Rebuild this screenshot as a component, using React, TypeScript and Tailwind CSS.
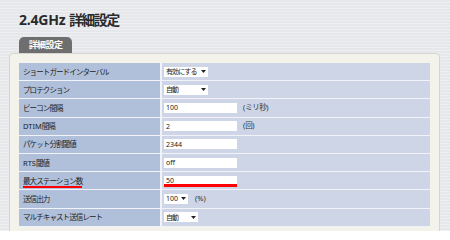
import React from "react";

type Field =
  | { kind: "select"; value: string; width: string; unit?: string }
  | { kind: "input"; value: string; unit?: string; marked?: boolean };

interface Row {
  label: string;
  field: Field;
  marked?: boolean;
}

const ROWS: Row[] = [
  { label: "ショートガードインターバル", field: { kind: "select", value: "有効にする", width: "w-[44px]" } },
  { label: "プロテクション", field: { kind: "select", value: "自動", width: "w-[44px]" } },
  { label: "ビーコン間隔", field: { kind: "input", value: "100", unit: "(ミリ秒)" } },
  { label: "DTIM間隔", field: { kind: "input", value: "2", unit: "(回)" } },
  { label: "パケット分割閾値", field: { kind: "input", value: "2344" } },
  { label: "RTS閾値", field: { kind: "input", value: "off" } },
  { label: "最大ステーション数", field: { kind: "input", value: "50", marked: true }, marked: true },
  { label: "送信出力", field: { kind: "select", value: "100", width: "w-[24px]", unit: "(%)" } },
  { label: "マルチキャスト送信レート", field: { kind: "select", value: "自動", width: "w-[34px]" } },
];

// Latin runs keep normal spacing; only the kana/kanji runs get squeezed
function Squeezed({ text }: { text: string }) {
  return (
    <>
      {text.split(/([A-Za-z0-9()%]+)/).map((part, i) =>
        /^[A-Za-z0-9()%]+$/.test(part) ? (
          <span key={i} className="tracking-normal">
            {part}
          </span>
        ) : (
          <span key={i}>{part}</span>
        )
      )}
    </>
  );
}

function Caret() {
  return (
    <svg width="5" height="3" viewBox="0 0 5 3" className="shrink-0">
      <path d="M0 0h5L2.5 3z" fill="#222" />
    </svg>
  );
}

function FieldCell({ field }: { field: Field }) {
  if (field.kind === "select") {
    return (
      <div className="flex items-center">
        <div
          className={`${field.width} h-[10px] bg-white flex items-center justify-between gap-[2px] pl-[2px] pr-[2px] text-[7px] tracking-[-0.9px] leading-none whitespace-nowrap text-[#222]`}
        >
          <span>
            <Squeezed text={field.value} />
          </span>
          <Caret />
        </div>
        {field.unit && (
          <span className="ml-[7px] text-[7.5px] leading-none whitespace-nowrap text-[#333]">{field.unit}</span>
        )}
      </div>
    );
  }
  return (
    <div className="flex items-center">
      <div
        className={`w-[73px] bg-white flex items-center pl-[2px] text-[7px] leading-none whitespace-nowrap text-[#222] ${
          field.marked ? "h-[11px] border-b-[3px] border-[#ff0000] mt-[2px]" : "h-[10px]"
        }`}
      >
        {field.value}
      </div>
      {field.unit && (
        <span className="ml-[6px] text-[7.5px] tracking-[-0.5px] leading-none whitespace-nowrap text-[#333]">
          <Squeezed text={field.unit} />
        </span>
      )}
    </div>
  );
}

export default function App() {
  return (
    <div className="w-[450px] h-[231px] overflow-hidden font-['Noto_Sans','Noto_Sans_CJK_JP',sans-serif] bg-[repeating-linear-gradient(180deg,#e6e7ea_0px,#e6e7ea_2px,#eeeff1_2px,#eeeff1_3px)]">
      <h1 className="pt-[13px] pl-[19px] text-[14px] leading-[14px] font-bold text-[#2a2a2a] tracking-[-0.2px]">
        2.4GHz <span className="tracking-[-1.6px]">詳細設定</span>
      </h1>

      <div className="mt-[10px] ml-[19px] w-[53px] h-[16px] rounded-t-[5px] bg-[#6e6e6e] flex items-center justify-center text-[9px] font-bold text-white tracking-[-0.6px]">
        詳細設定
      </div>

      <div className="ml-[9px] w-[431px] h-[200px] rounded-t-[4px] border border-[#d6d6d0] bg-[#f3f3ec] pt-[9px] pl-[9px]">
        <div className="w-[411px] flex flex-col">
          {ROWS.map((row) => (
            <div key={row.label} className="flex h-[18.2px] border-b border-[#f1f3f8]">
              <div className="w-[143px] shrink-0 bg-[#b0c0da] border-r-[2px] border-[#f1f3f8] flex items-center pl-[4px]">
                <span
                  className={`text-[7.5px] tracking-[-0.9px] leading-[8px] whitespace-nowrap text-[#222] ${
                    row.marked ? "border-b-[2px] border-[#ff0000] pb-[1px] mt-[3px]" : ""
                  }`}
                >
                  <Squeezed text={row.label} />
                </span>
              </div>
              <div className="flex-1 bg-[#cdd5e7] flex items-center pl-[2px]">
                <FieldCell field={row.field} />
              </div>
            </div>
          ))}
        </div>
      </div>
    </div>
  );
}
